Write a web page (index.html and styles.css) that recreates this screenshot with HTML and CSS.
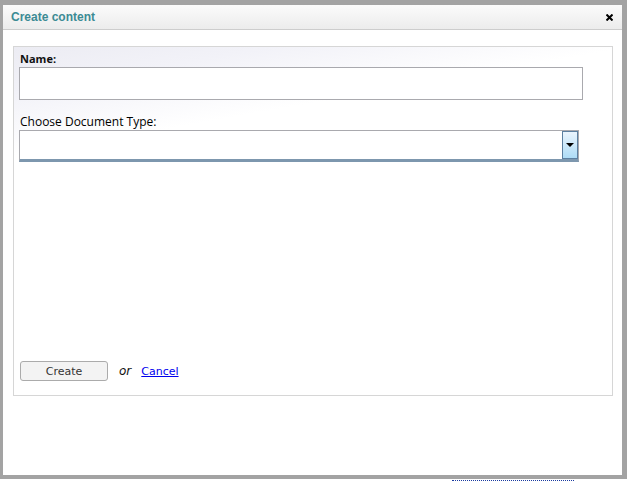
FILE: index.html
```html
<!DOCTYPE html>
<html>
<head>
<meta charset="utf-8">
<link rel="stylesheet" href="styles.css">
</head>
<body>
<div class="window">
  <div class="titlebar">
    <span class="title">Create content</span>
    <svg class="close" width="7" height="7" viewBox="0 0 7 7"><path d="M0.5 0.5 L6.5 6.5 M6.5 0.5 L0.5 6.5" stroke="#000" stroke-width="2"/></svg>
  </div>
  <div class="body">
    <div class="panel">
      <label class="label">Name:</label>
      <div class="input"></div>
      <label class="label label2">Choose Document Type:</label>
      <div class="select">
        <div class="select-btn"><span class="arrow"></span></div>
      </div>
      <div class="spacer"></div>
      <div class="actions">
        <button class="btn">Create</button>
        <span class="or">or</span>
        <a class="cancel" href="#">Cancel</a>
      </div>
    </div>
  </div>
</div>
<div class="below">
  <span class="dots"></span>
</div>
</body>
</html>
```
FILE: styles.css
```css
html, body { margin: 0; padding: 0; background: #fff; }
body { width: 627px; height: 487px; overflow: hidden; font-family: "DejaVu Sans", Verdana, sans-serif; }
.window {
  box-sizing: border-box;
  width: 627px;
  height: 479px;
  border-style: solid;
  border-color: #a3a3a3;
  border-width: 5px 5px 4px 3px;
  background: #fff;
  display: flex;
  flex-direction: column;
}
.titlebar {
  height: 24px;
  border-bottom: 1px solid #cdcdcd;
  background: linear-gradient(#fbfbfb, #ececec);
  display: flex;
  align-items: center;
  justify-content: space-between;
  padding: 0 9px 0 8px;
  flex: none;
}
.title { color: #3c8b94; font-weight: bold; font-size: 12px; font-family: "Liberation Sans", Arial, sans-serif; }
.close { display: block; }
.body { flex: 1; padding: 16px 9px 0 10px; }
.panel {
  box-sizing: border-box;
  height: 350px;
  border: 1px solid #d6d6d6;
  background: linear-gradient(170deg, #ececf3 0%, #f2f2f8 10%, #ffffff 24%);
  padding: 4px 29px 14px 5px;
  display: flex;
  flex-direction: column;
}
.label { display: block; font-size: 11px; color: #111; font-weight: bold; font-family: "Open Sans", sans-serif; height: 16px; line-height: 16px; padding-left: 1px; }
.label2 { margin-top: 14px; font-weight: normal; font-size: 12px; color: #000; }
.input {
  height: 31px;
  border: 1px solid #a9a9ae;
  background: #fff;
}
.select {
  height: 28px;
  border: 1px solid #a9a9ae;
  border-bottom: 3px solid #7d97ae;
  background: #fff;
  margin-right: 4px;
  display: flex;
  justify-content: flex-end;
}
.select-btn {
  width: 14px;
  height: 26px;
  border: 1px solid #5c7fa0;
  background: linear-gradient(#eaf4fd, #aedcf6);
  display: flex;
  align-items: center;
  justify-content: center;
}
.arrow { width: 0; height: 0; border-left: 4px solid transparent; border-right: 4px solid transparent; border-top: 4px solid #000; }
.spacer { flex: 1; }
.actions { display: flex; align-items: center; padding-left: 1px; }
.btn {
  width: 88px; height: 20px;
  border: 1px solid #ababab;
  border-radius: 3px;
  background: #f3f3f3;
  font-family: "DejaVu Sans", sans-serif;
  font-size: 11px;
  color: #333;
  padding: 0;
}
.or { font-style: italic; font-size: 12px; margin-left: 11px; color: #111; font-family: "DejaVu Sans", sans-serif; }
.cancel { margin-left: 10px; font-size: 11px; color: #0000ee; text-decoration: underline; font-family: "DejaVu Sans", sans-serif; }
.below { height: 8px; position: relative; }
.dots { position: absolute; left: 452px; top: 1px; width: 122px; border-top: 1px dotted #1a3aa0; }
```
